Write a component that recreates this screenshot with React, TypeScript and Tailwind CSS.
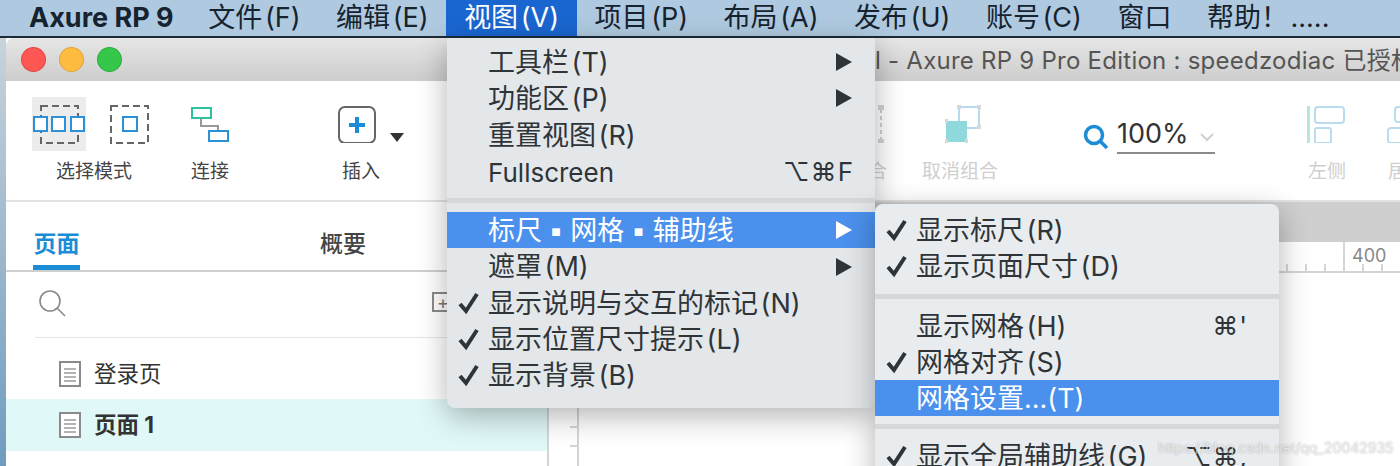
const menuBar = ["文件 (F)", "编辑 (E)", "视图 (V)", "项目 (P)", "布局 (A)", "发布 (U)", "账号 (C)", "窗口", "帮助！ ....."];

type Row = { label?: string; check?: boolean; arrow?: boolean; keys?: string; active?: boolean; gap?: number };

const viewMenu: Row[] = [
  { label: "工具栏 (T)", arrow: true },
  { label: "功能区 (P)", arrow: true },
  { label: "重置视图 (R)" },
  { label: "Fullscreen", keys: "⌥⌘F" },
  { gap: 1 },
  { label: "标尺 ▪ 网格 ▪ 辅助线", arrow: true, active: true },
  { label: "遮罩 (M)", arrow: true },
  { label: "显示说明与交互的标记 (N)", check: true },
  { label: "显示位置尺寸提示 (L)", check: true },
  { label: "显示背景 (B)", check: true },
];

const gridMenu: Row[] = [
  { label: "显示标尺 (R)", check: true },
  { label: "显示页面尺寸 (D)", check: true },
  { gap: 1 },
  { label: "显示网格 (H)", keys: "⌘'" },
  { label: "网格对齐 (S)", check: true },
  { label: "网格设置...(T)", active: true },
  { gap: 2 },
  { label: "显示全局辅助线 (G)", check: true, keys: "⌥⌘," },
];

const Check = () => (
  <svg width="22" height="24" viewBox="0 0 22 24" className="shrink-0">
    <path d="M2 13 L8 20 L19 3" fill="none" stroke="#2f3438" strokeWidth="4" />
  </svg>
);

const MenuRow = ({ row, keysRight }: { row: Row; keysRight: number }) => {
  if (row.gap) {
    return (
      <div className={row.gap === 2 ? "h-[22px] pt-[8px]" : "h-[23px] pt-[9px]"}>
        <div className="h-[5px] bg-[#d5d8da]"></div>
      </div>
    );
  }
  const dotted = row.label?.includes("▪");
  return (
    <div
      className={`relative flex h-[36.3px] items-center whitespace-nowrap pl-[41px] text-[27px] ${
        dotted ? "[word-spacing:-1px]" : "[word-spacing:-5px]"
      } ${row.active ? "bg-[#4a90ec] text-white" : "text-[#2f3438]"}`}
    >
      {row.check && (
        <span className="absolute left-[11px] top-[6px]">
          <Check />
        </span>
      )}
      <span className={row.label === "Fullscreen" ? "translate-y-px text-[26px]" : "translate-y-px"}>{row.label}</span>
      {row.keys && (
        <span className="ml-auto text-[26px] tracking-[1px]" style={{ paddingRight: keysRight }}>
          {row.keys}
        </span>
      )}
      {row.arrow && (
        <svg width="18" height="18" viewBox="0 0 18 18" className="ml-auto mr-[22px] shrink-0">
          <polygon points="1,0 17,9 1,18" fill={row.active ? "#ffffff" : "#2f3438"} />
        </svg>
      )}
    </div>
  );
};

const ToolItem = ({
  label,
  width,
  margin,
  faded,
  children,
}: {
  label: string;
  width: number;
  margin: number;
  faded?: boolean;
  children?: React.ReactNode;
}) => (
  <div className="flex shrink-0 flex-col items-center pt-[16px]" style={{ width, marginLeft: margin }}>
    <div className="flex h-[54px] w-full items-start justify-center">{children}</div>
    <div className={`mt-[9px] whitespace-nowrap text-[19px] leading-[24px] ${faded ? "text-[#cfcfcf]" : "text-[#444]"}`}>
      {label}
    </div>
  </div>
);

const DocIcon = () => (
  <svg width="22" height="26" viewBox="0 0 22 26" className="shrink-0">
    <rect x="1" y="1" width="20" height="24" fill="#fff" stroke="#8a8a8a" strokeWidth="2" />
    <path d="M5 8 H17 M5 12 H17 M5 16 H17 M5 20 H17" stroke="#9a9a9a" strokeWidth="1.4" />
  </svg>
);

export default function App() {
  return (
    <div className="relative h-[466px] w-[1400px] overflow-hidden bg-white font-[Inter,'Noto_Sans_CJK_SC','DejaVu_Sans',sans-serif]">
      {/* menu bar */}
      <div className="flex h-[36px] items-center bg-[#afcae0] pl-[10px] text-[27px] text-[#16222e] [word-spacing:-5px]">
        <div className="whitespace-nowrap pl-[19px] pr-[17px] font-bold [word-spacing:0]">Axure RP 9</div>
        {menuBar.map((item) => (
          <div
            key={item}
            className={`flex h-[36px] items-center whitespace-nowrap px-[17.75px] ${
              item.startsWith("视图") ? "bg-[#1a66d0] text-white" : ""
            }`}
          >
            {item}
          </div>
        ))}
      </div>
      <div className="h-[2px] bg-[#1c2a36]"></div>

      <div className="flex h-[428px]">
        <div className="w-[6px] shrink-0 bg-gradient-to-b from-[#c9d3da] to-[#6f9cbf]"></div>

        {/* window */}
        <div className="flex min-w-0 flex-1 flex-col overflow-hidden rounded-tl-[8px] bg-white">
          <div className="flex h-[43px] shrink-0 items-center bg-gradient-to-b from-[#e6e6e6] to-[#cdcdcd] pl-[16px]">
            <div className="flex shrink-0 gap-[15px]">
              <div className="h-[23px] w-[23px] rounded-full bg-[#fc5753] ring-1 ring-[#df4744]"></div>
              <div className="h-[23px] w-[23px] rounded-full bg-[#fdbc40] ring-1 ring-[#e0a536]"></div>
              <div className="h-[23px] w-[23px] rounded-full bg-[#34c749] ring-1 ring-[#2dac3f]"></div>
            </div>
            <div className="ml-[754px] mt-[3px] whitespace-nowrap text-[24px] tracking-[0.25px] text-[#555]">
              l - Axure RP 9 Pro Edition : speedzodiac 已授权
            </div>
          </div>

          {/* toolbar */}
          <div className="flex h-[121px] shrink-0 items-start border-b-2 border-[#e2e2e2] pl-[26px]">
            <ToolItem label="选择模式" width={124} margin={0}>
              <svg width="124" height="54" viewBox="0 0 124 54" className="shrink-0">
                <rect x="0" y="0" width="54" height="54" fill="#ececec" />
                <rect x="9" y="9" width="37" height="37" fill="none" stroke="#666" strokeWidth="2" strokeDasharray="7 4" />
                <rect x="2" y="20" width="13" height="14" fill="#fff" stroke="#2a90d8" strokeWidth="2" />
                <rect x="20" y="20" width="13" height="14" fill="#fff" stroke="#2a90d8" strokeWidth="2" />
                <rect x="39" y="20" width="13" height="14" fill="#fff" stroke="#2a90d8" strokeWidth="2" />
                <rect x="79" y="9" width="37" height="37" fill="none" stroke="#666" strokeWidth="2" strokeDasharray="7 4" />
                <rect x="91" y="20" width="14" height="14" fill="#fff" stroke="#2a90d8" strokeWidth="2" />
              </svg>
            </ToolItem>
            <ToolItem label="连接" width={40} margin={34}>
              <svg width="40" height="46" viewBox="0 0 40 46" className="shrink-0">
                <path d="M11 21 V29 H28 V34" fill="none" stroke="#999" strokeWidth="2" />
                <rect x="2" y="11" width="19" height="10" fill="#fff" stroke="#2cc3a0" strokeWidth="2" />
                <rect x="19" y="34" width="19" height="10" fill="#fff" stroke="#2a90d8" strokeWidth="2" />
              </svg>
            </ToolItem>
            <ToolItem label="插入" width={46} margin={108}>
              <svg width="46" height="46" viewBox="0 0 46 46" className="shrink-0">
                <rect x="1" y="10" width="36" height="36" rx="6" fill="#fff" stroke="#666" strokeWidth="2" />
                <path d="M19 20 V36 M11 28 H27" stroke="#1b8dd6" strokeWidth="4" />
              </svg>
            </ToolItem>
            <svg width="14" height="9" viewBox="0 0 14 9" className="ml-[6px] mt-[52px] shrink-0">
              <polygon points="0,0 14,0 7,9" fill="#333" />
            </svg>
            <ToolItem label="组合" width={40} margin={444} faded>
              <svg width="40" height="46" viewBox="0 0 40 46" className="shrink-0">
                <path d="M33 12 V44" stroke="#cfcfcf" strokeWidth="2" strokeDasharray="4 3" />
                <rect x="30" y="8" width="6" height="5" fill="#d4d4d4" />
                <rect x="30" y="42" width="6" height="5" fill="#d4d4d4" />
              </svg>
            </ToolItem>
            <ToolItem label="取消组合" width={76} margin={34} faded>
              <svg width="44" height="46" viewBox="0 0 44 46" className="shrink-0">
                <rect x="21" y="10" width="20" height="21" fill="#fff" stroke="#b5dcee" strokeWidth="2" />
                <rect x="8" y="24" width="21" height="21" fill="#8fd8dc" />
                <path d="M7 24 h3 M19 10 h4 M39 10 h4 M39 30 h4 M7 44 h3 M27 44 h3" stroke="#d8d8d8" strokeWidth="4" />
              </svg>
            </ToolItem>
            <div className="ml-[85px] mt-[35px] flex shrink-0 items-start">
              <svg width="26" height="26" viewBox="0 0 26 26" className="mt-[8px] shrink-0">
                <circle cx="11" cy="11" r="8.5" fill="none" stroke="#1b8dd6" strokeWidth="3.5" />
                <path d="M17 17 L24 24" stroke="#1b8dd6" strokeWidth="3.5" />
              </svg>
              <div className="ml-[8px] flex h-[38px] w-[98px] items-center border-b-2 border-[#8a8a8a] text-[27px] text-[#333]">
                100%
                <svg width="14" height="9" viewBox="0 0 14 9" className="ml-[11px] mt-[6px] shrink-0">
                  <path d="M1 1 L7 7 L13 1" fill="none" stroke="#d0d0d0" strokeWidth="2" />
                </svg>
              </div>
            </div>
            <ToolItem label="左侧" width={42} margin={91} faded>
              <svg width="42" height="46" viewBox="0 0 42 46" className="shrink-0">
                <rect x="1" y="9" width="3" height="38" fill="#b5e8d8" />
                <rect x="9" y="10" width="29" height="16" rx="3" fill="none" stroke="#b9dcee" strokeWidth="2" />
                <rect x="9" y="31" width="16" height="15" rx="2" fill="none" stroke="#b9dcee" strokeWidth="2" />
              </svg>
            </ToolItem>
            <ToolItem label="居中" width={42} margin={38} faded>
              <svg width="42" height="46" viewBox="0 0 42 46" className="shrink-0">
                <rect x="9" y="10" width="16" height="15" rx="3" fill="none" stroke="#b9dcee" strokeWidth="2" />
                <rect x="2" y="31" width="30" height="15" rx="3" fill="none" stroke="#b9dcee" strokeWidth="2" />
              </svg>
            </ToolItem>
          </div>

          <div className="flex min-h-0 flex-1">
            {/* left panel */}
            <div className="w-[541px] shrink-0">
              <div className="flex h-[70px] items-start border-b-2 border-[#cfcfcf] pl-[27px] text-[23px]">
                <div className="flex h-[68px] w-[47px] flex-col items-center justify-start border-b-[5px] border-[#1b8dd6] pt-[26px] font-bold leading-[32px] text-[#1b8dd6]">
                  页面
                </div>
                <div className="ml-[240px] pt-[26px] font-medium leading-[32px] text-[#444]">概要</div>
              </div>
              <div className="flex h-[65px] items-start pl-[33px] pt-[18px]">
                <svg width="28" height="28" viewBox="0 0 28 28" className="shrink-0">
                  <circle cx="11" cy="11" r="10" fill="none" stroke="#8a8a8a" strokeWidth="1.6" />
                  <path d="M18 18 L26 26" stroke="#8a8a8a" strokeWidth="1.6" />
                </svg>
                <div className="ml-auto mr-[93px] mt-[2px] flex h-[20px] w-[22px] items-center justify-center border-2 border-[#8a8a8a] text-[18px] text-[#777]">
                  +
                </div>
              </div>
              <div className="ml-[29px] h-px bg-[#e6e6e6]"></div>
              <div className="flex h-[61px] items-center gap-[13px] pl-[53px] pt-[11px] text-[22.5px] text-[#333]">
                <DocIcon />
                <span>登录页</span>
              </div>
              <div className="flex h-[52px] items-center gap-[13px] bg-[#e0f8f8] pl-[53px] text-[22.5px] font-bold text-[#333]">
                <DocIcon />
                <span>页面 1</span>
              </div>
            </div>

            {/* canvas */}
            <div className="flex min-w-0 flex-1 flex-col">
              <div className="h-[40px] shrink-0 bg-[#cfcfcf]"></div>
              <div className="relative h-[31px] shrink-0 border-b-2 border-[#d4d4d4] pl-[805px] text-[18px] leading-[28px] text-[#888]">
                400
                <svg width="853" height="29" viewBox="0 0 853 29" className="absolute left-0 top-0">
                  <path d="M797 0 V29 M740 22 V29 M759 22 V29 M778 22 V29 M816 22 V29 M835 22 V29" stroke="#c8c8c8" strokeWidth="1.5" />
                </svg>
              </div>
              <div className="flex-1">
                <div className="h-full w-[32px] border-x-2 border-[#d4d4d4]">
                  <svg width="28" height="190" viewBox="0 0 28 190">
                    <path d="M21 134 H28 M21 154 H28 M21 173 H28" stroke="#c8c8c8" strokeWidth="1.5" />
                  </svg>
                </div>
              </div>
            </div>
          </div>
        </div>
      </div>

      {/* view menu */}
      <div className="absolute left-[447px] top-[38px] w-[428px] rounded-b-[8px] bg-[#e3e7ea] pb-[14px] pt-[6px] shadow-[0_8px_30px_rgba(0,0,0,0.3)]">
        {viewMenu.map((row, i) => (
          <MenuRow key={i} row={row} keysRight={21} />
        ))}
      </div>

      {/* grid submenu */}
      <div className="absolute left-[875px] top-[204px] h-[300px] w-[404px] rounded-t-[8px] bg-[#e9ecee] pt-[8px] shadow-[0_8px_30px_rgba(0,0,0,0.3)]">
        {gridMenu.map((row, i) => (
          <MenuRow key={i} row={row} keysRight={31} />
        ))}
      </div>

      <div className="absolute left-[1158px] top-[438px] whitespace-nowrap text-[14px] leading-[20px] text-white/60 [text-shadow:0_0_2px_rgba(0,0,0,0.3)]">
        https://blog.csdn.net/qq_20042935
      </div>
    </div>
  );
}
